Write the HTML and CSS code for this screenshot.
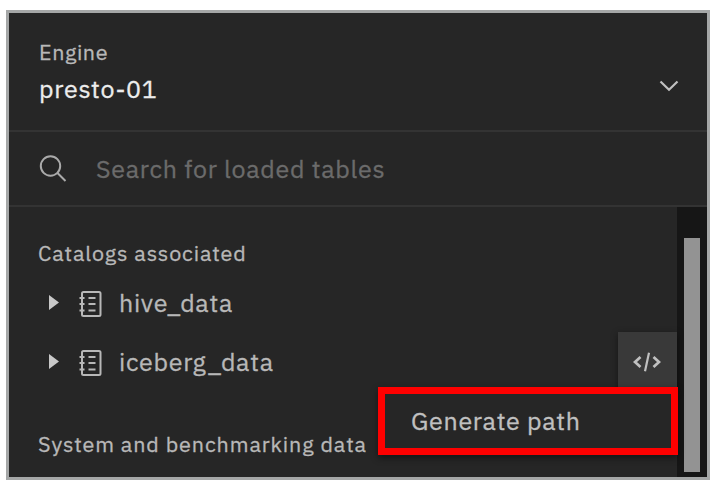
FILE: index.html
```html
<!DOCTYPE html>
<html lang="en">
<head>
<meta charset="utf-8">
<title>Data explorer</title>
<link rel="stylesheet" href="styles.css">
</head>
<body>
<svg class="defs" aria-hidden="true">
  <symbol id="catalog" viewBox="0 0 24 28">
    <rect x="3" y="2" width="18.500" height="24" rx="1.500"/>
    <path d="M.5 8h5M.5 14h5M.5 20.500h5M9.500 8h7M9.500 14h7M9.500 20.500h7"/>
  </symbol>
</svg>
<main class="panel">
  <header class="engine">
    <div>
      <div class="label engine-label">Engine</div>
      <div class="engine-name">presto-01</div>
    </div>
    <svg class="chevron" viewBox="0 0 20 12"><path d="M1.500 1.500 10 9.800l8.500-8.300"/></svg>
  </header>
  <div class="search">
    <svg class="search-icon" viewBox="0 0 28 28"><circle cx="11.500" cy="11" r="9.700"/><path d="m18.500 18 8 8"/></svg>
    <span class="placeholder">Search for loaded tables</span>
  </div>
  <div class="content">
    <section class="tree">
      <div class="label catalogs">Catalogs associated</div>
      <div class="row">
        <svg class="caret" viewBox="0 0 10 15"><path d="M0 0v15l10-7.500z"/></svg>
        <svg class="catalog"><use href="#catalog"/></svg>
        <span class="name hive">hive_data</span>
      </div>
      <div class="row">
        <svg class="caret" viewBox="0 0 10 15"><path d="M0 0v15l10-7.500z"/></svg>
        <svg class="catalog"><use href="#catalog"/></svg>
        <span class="name iceberg">iceberg_data</span>
        <span class="code-button"><svg class="code" viewBox="0 0 28 20"><path d="M7.500 5 2 10l5.500 5M20.500 5l5.500 5-5.500 5"/><path class="slash" d="M16 .8 12 19.200"/></svg></span>
        <div class="menu">Generate path</div>
      </div>
      <div class="label system">System and benchmarking data</div>
    </section>
    <div class="track"><div class="thumb"></div></div>
  </div>
</main>
</body>
</html>
```
FILE: styles.css
```css
* { box-sizing: border-box; }
body {
  margin: 0;
  padding: 10px 10px 4px 6px;
  height: 484px;
  background: #fff;
  font-family: "IBM Plex Sans", Roboto, "Liberation Sans", sans-serif;
  color: #c4c4c4;
  -webkit-text-stroke: .3px currentColor;
  overflow: hidden;
}
.defs { position: absolute; width: 0; height: 0; }
svg { display: block; flex: none; fill: none; stroke: #c0c0c0; stroke-width: 2; }
.panel {
  height: 470px;
  border: 3px solid #a5a7a7;
  background: #262626;
  display: flex;
  flex-direction: column;
  overflow: hidden;
  white-space: nowrap;
}
.engine {
  height: 119px;
  flex: none;
  padding: 25px 28px 0 30px;
  display: flex;
  justify-content: space-between;
  border-bottom: 2px solid #333;
}
.label { font-size: 21.5px; line-height: 28px; color: #b8b8b8; }
.engine-label { letter-spacing: .6px; }
.engine-name { margin-top: 7px; font-size: 25px; line-height: 32px; letter-spacing: .7px; color: #ececec; }
.chevron { width: 20px; height: 12px; margin-top: 42px; stroke-width: 2.2; }
.search {
  height: 75px;
  flex: none;
  padding: 0 30px;
  display: flex;
  align-items: center;
  border-bottom: 2px solid #333;
}
.search-icon { width: 28px; height: 28px; stroke: #aaa; }
.placeholder { margin: 1px 0 0 29px; font-size: 25px; line-height: 30px; letter-spacing: .7px; color: #6b6b6b; }
.content { flex: 1; display: flex; min-height: 0; }
.tree { width: 668px; padding-top: 32px; }
.catalogs { padding-left: 29px; letter-spacing: .85px; }
.row { position: relative; height: 59px; padding-left: 40px; display: flex; align-items: center; }
.catalogs + .row { margin-top: 6px; }
.caret { width: 10px; height: 15px; fill: #c8c8c8; stroke: none; }
.catalog { width: 24px; height: 28px; margin: 2px 0 0 20px; stroke: #b8b8b8; }
.name { margin-left: 16px; font-size: 25px; line-height: 30px; letter-spacing: .7px; color: #b8b8b8; }
.code-button {
  width: 59px;
  height: 59px;
  margin-left: auto;
  display: flex;
  align-items: center;
  justify-content: center;
  background: #393939;
  box-shadow: 0 2px 7px rgba(0,0,0,.45);
}
.code { width: 28px; height: 20px; margin-right: 2px; stroke-width: 2.7; }
.slash { stroke-width: 2.2; }
.menu {
  position: absolute;
  z-index: 1;
  top: 55px;
  right: -1px;
  width: 300px;
  height: 68px;
  padding-left: 26px;
  border: 7px solid #fe0000;
  background: #262626;
  box-shadow: 0 3px 7px rgba(0,0,0,.45);
  font-size: 25px;
  line-height: 54px;
  letter-spacing: .7px;
  color: #c0c0c0;
}
.system { margin-top: 39px; padding-left: 29px; letter-spacing: .9px; }
.track { flex: 1; padding: 31px 7px 5px; background: #161616; }
.thumb { height: 100%; background: #939393; }
```
